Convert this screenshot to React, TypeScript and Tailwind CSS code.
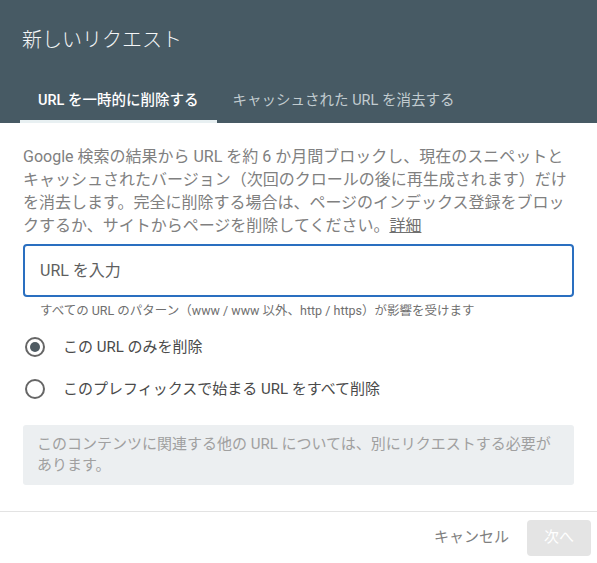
import React, { useState } from 'react';

function App() {
  const [mode, setMode] = useState<'single' | 'prefix'>('single');
  const [url, setUrl] = useState('');

  return (
    <div className="flex flex-col w-[597px] h-[563px] bg-white font-['Roboto','Noto_Sans_CJK_JP',sans-serif]">
      <header className="bg-[#475a64] h-[123px] flex flex-col">
        <h1 className="text-[20px] leading-[28px] text-[#f4f6f7] px-[22px] pt-[26px] font-light">新しいリクエスト</h1>
        <div className="flex mt-auto px-[20px]">
          <button className="relative h-[45px] px-[18px] text-[14.5px] font-medium text-white">
            URL を一時的に削除する
            <span className="absolute left-0 right-0 bottom-0 h-[3px] bg-[#e8f0f2]" />
          </button>
          <button className="h-[45px] px-[16px] text-[14.5px] text-[#c2ccd0]">キャッシュされた URL を消去する</button>
        </div>
      </header>

      <div className="flex-1 px-[23px] pt-[22px]">
        <p className="text-[16px] leading-[23px] text-[#808080]">
          Google 検索の結果から URL を約 6 か月間ブロックし、現在のスニペットとキャッシュされたバージョン（次回のクロールの後に再生成されます）だけを消去します。完全に削除する場合は、ページのインデックス登録をブロックするか、サイトからページを削除してください。
          <a className="underline text-[#707070]">詳細</a>
        </p>

        <input
          value={url}
          onChange={(e) => setUrl(e.target.value)}
          placeholder="URL を入力"
          className="mt-[7px] w-full h-[53px] border-2 border-[#2a6fc0] rounded-[4px] px-[15px] text-[16px] text-[#333] placeholder:text-[#5f5f5f] outline-none"
        />
        <p className="text-[12.5px] leading-[16px] text-[#6f6f6f] pl-[17px] mt-[6px]">
          すべての URL のパターン（www / www 以外、http / https）が影響を受けます
        </p>

        <div className="flex flex-col mt-[17px] gap-[20px]">
          {[
            { key: 'single' as const, label: 'この URL のみを削除' },
            { key: 'prefix' as const, label: 'このプレフィックスで始まる URL をすべて削除' },
          ].map((o) => (
            <label key={o.key} className="flex items-center h-[22px] cursor-pointer" onClick={() => setMode(o.key)}>
              <span className="w-[20px] h-[20px] rounded-full border-2 border-[#666] flex items-center justify-center ml-[2px]">
                {mode === o.key && <span className="w-[10px] h-[10px] rounded-full bg-[#4f5b62]" />}
              </span>
              <span className="ml-[18px] text-[15px] text-[#4a4a4a]">{o.label}</span>
            </label>
          ))}
        </div>

        <div className="mt-[25px] bg-[#eceff1] rounded-[3px] px-[14px] py-[9px] text-[15px] leading-[21px] text-[#a0a0a0]">
          このコンテンツに関連する他の URL については、別にリクエストする必要があります。
        </div>
      </div>

      <footer className="border-t border-[#e3e3e3] h-[52px] flex items-center justify-end pr-[6px] gap-[16px]">
        <button className="text-[15px] text-[#808080] px-[2px]">キャンセル</button>
        <button className="w-[64px] h-[36px] rounded-[4px] bg-[#e4e4e4] text-[15px] text-white">次へ</button>
      </footer>
    </div>
  );
}

export default App;
